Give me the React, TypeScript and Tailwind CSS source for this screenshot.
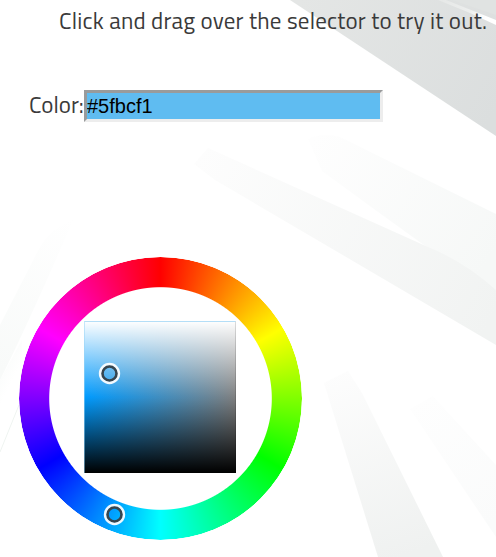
import React from "react";

function Backdrop() {
  return (
    <svg className="absolute inset-0 -z-10" width="496" height="557" viewBox="0 0 496 557" aria-hidden="true">
      <defs>
        <linearGradient id="corner" gradientUnits="userSpaceOnUse" x1="300" y1="0" x2="496" y2="110">
          <stop offset="0" stopColor="#e4e6e5" />
          <stop offset="1" stopColor="#dbdede" />
        </linearGradient>
        <linearGradient id="streak" gradientUnits="userSpaceOnUse" x1="440" y1="0" x2="496" y2="24">
          <stop offset="0" stopColor="#e6e8e7" />
          <stop offset="0.5" stopColor="#eceeed" />
          <stop offset="0.8" stopColor="#ffffff" />
        </linearGradient>
        <linearGradient id="rayA" gradientUnits="userSpaceOnUse" x1="200" y1="155" x2="496" y2="310">
          <stop offset="0" stopColor="#fdfdfd" />
          <stop offset="1" stopColor="#f1f3f2" />
        </linearGradient>
        <linearGradient id="rayB" gradientUnits="userSpaceOnUse" x1="320" y1="130" x2="496" y2="250">
          <stop offset="0" stopColor="#fefefe" />
          <stop offset="1" stopColor="#f6f8f7" />
        </linearGradient>
        <linearGradient id="rayC" gradientUnits="userSpaceOnUse" x1="336" y1="373" x2="400" y2="557">
          <stop offset="0" stopColor="#fdfdfd" />
          <stop offset="1" stopColor="#eff1f0" />
        </linearGradient>
        <linearGradient id="rayD" gradientUnits="userSpaceOnUse" x1="420" y1="400" x2="496" y2="520">
          <stop offset="0" stopColor="#fefefe" />
          <stop offset="1" stopColor="#fafbfb" />
        </linearGradient>
        <linearGradient id="rayE" gradientUnits="userSpaceOnUse" x1="70" y1="215" x2="0" y2="370">
          <stop offset="0" stopColor="#ffffff" />
          <stop offset="1" stopColor="#f8faf9" />
        </linearGradient>
        <linearGradient id="rayF" gradientUnits="userSpaceOnUse" x1="8" y1="350" x2="24" y2="358">
          <stop offset="0" stopColor="#fafcfb" />
          <stop offset="1" stopColor="#ffffff" />
        </linearGradient>
      </defs>
      <path d="M290 0H496V136Z" fill="url(#corner)" />
      <path d="M452 0L496 15V0Z" fill="#e0e3e2" />
      <path d="M438 0H446L496 20V25L470 13Z" fill="url(#streak)" />
      <path d="M308 139Q322 132 340 137L496 214V294L428 248Q375 210 322 171Z" fill="url(#rayB)" />
      <path d="M194 164L208 148L428 247Q465 262 496 290V345L215 180Z" fill="url(#rayA)" />
      <path d="M324 383L348 371L362 393L443 557H378Z" fill="url(#rayC)" />
      <path d="M410 409L433 396L452 417L496 465V537Z" fill="url(#rayD)" />
      <path d="M74 218L58 228Q48 234 40 247L0 325V380Q30 320 74 218Z" fill="url(#rayE)" />
      <path d="M0 380L22 340V400L0 430Z" fill="url(#rayF)" />
      <path d="M0 452L19 405" stroke="#eff4f1" strokeWidth="1" />
    </svg>
  );
}

function Marker({ className }: { className: string }) {
  return (
    <svg className={"absolute " + className} width="23" height="23" viewBox="0 0 23 23">
      <circle cx="11.5" cy="11.5" r="9.2" fill="none" stroke="#fff" strokeWidth="3" opacity="0.93" />
      <circle cx="11.5" cy="11.5" r="7" fill="none" stroke="#36454f" strokeWidth="2.6" />
    </svg>
  );
}

export default function App() {
  return (
    <main className="relative isolate h-[557px] w-[496px] overflow-hidden bg-white font-['Titillium_Web','Roboto','Noto_Sans',sans-serif] text-[23px] text-[#3a3a3a]">
      <Backdrop />
      <p className="h-[90px] pt-[6px] pl-[59px] leading-[30px] whitespace-nowrap tracking-[0.2px]">
        Click and drag over the selector to try it out.
      </p>
      <div className="flex h-8 items-center">
        <label htmlFor="color" className="w-[84px] pb-[2px] pl-[29px] leading-[30px] whitespace-nowrap">
          Color:
        </label>
        <input
          id="color"
          defaultValue="#5fbcf1"
          className="h-8 w-[299px] border-[3px] border-t-[#999b9c] border-r-[#ededed] border-b-[#ededed] border-l-[#999b9c] bg-[#5fbcf1] font-['Liberation_Sans',Arial,sans-serif] text-[20px] text-black outline-none"
        />
      </div>
      <div className="relative mt-[135px] ml-[19px] grid size-[283px]">
        <div className="col-start-1 row-start-1 size-[283px] rounded-full bg-[conic-gradient(#f00,#ff0,#0f0,#0ff,#00f,#f0f,#f00)] [mask-image:radial-gradient(circle,transparent_110.8px,black_111.8px,black_141px,transparent_142px)]" />
        <div className="col-start-1 row-start-1 mt-[64px] ml-[65px] size-[152px] border border-b-0 border-t-[#b4def7] border-r-[#00000022] border-l-[#9bd5f688] bg-[linear-gradient(to_bottom,#fff,rgba(255,255,255,0)_50%,rgba(0,0,0,0)_50%,#000),linear-gradient(to_right,#009bff,#808080)] bg-origin-border" />
        <Marker className="top-[105px] left-[79px]" />
        <Marker className="top-[246px] left-[84px]" />
      </div>
    </main>
  );
}
